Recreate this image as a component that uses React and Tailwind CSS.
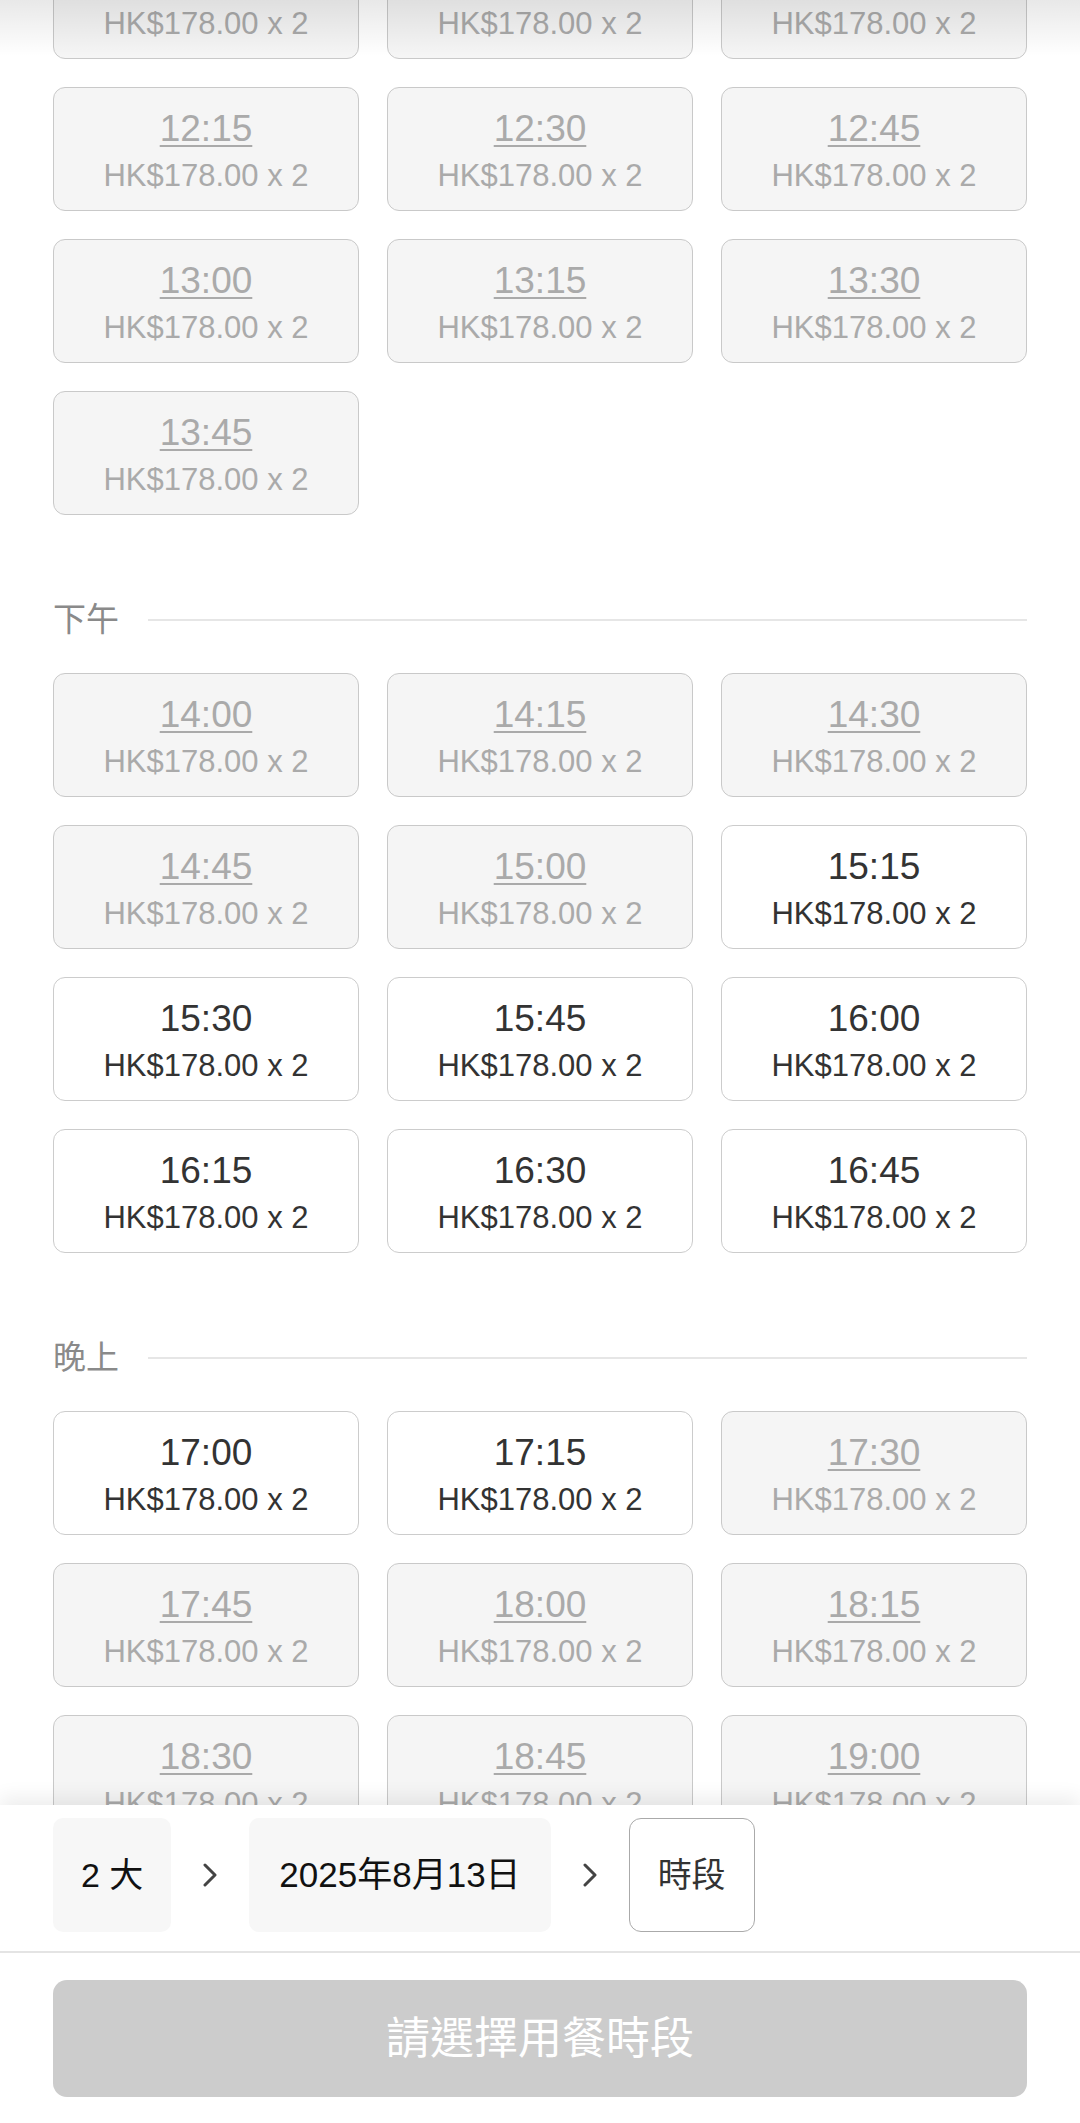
import { ChevronRight } from 'lucide-react';

const PRICE = 'HK$178.00 x 2';

const sections = [
  {
    label: null,
    slots: [
      { t: '11:30', ok: false },
      { t: '11:45', ok: false },
      { t: '12:00', ok: false },
      { t: '12:15', ok: false },
      { t: '12:30', ok: false },
      { t: '12:45', ok: false },
      { t: '13:00', ok: false },
      { t: '13:15', ok: false },
      { t: '13:30', ok: false },
      { t: '13:45', ok: false },
    ],
  },
  {
    label: '下午',
    slots: [
      { t: '14:00', ok: false },
      { t: '14:15', ok: false },
      { t: '14:30', ok: false },
      { t: '14:45', ok: false },
      { t: '15:00', ok: false },
      { t: '15:15', ok: true },
      { t: '15:30', ok: true },
      { t: '15:45', ok: true },
      { t: '16:00', ok: true },
      { t: '16:15', ok: true },
      { t: '16:30', ok: true },
      { t: '16:45', ok: true },
    ],
  },
  {
    label: '晚上',
    slots: [
      { t: '17:00', ok: true },
      { t: '17:15', ok: true },
      { t: '17:30', ok: false },
      { t: '17:45', ok: false },
      { t: '18:00', ok: false },
      { t: '18:15', ok: false },
      { t: '18:30', ok: false },
      { t: '18:45', ok: false },
      { t: '19:00', ok: false },
    ],
  },
];

function Slot({ t, ok }) {
  return (
    <button
      disabled={!ok}
      className={`flex h-[124px] flex-col items-center rounded-[12px] border pt-[19px] ${
        ok ? 'border-[#cccccc] bg-white text-[#333333]' : 'border-[#c9c9c9] bg-[#f5f5f5] text-[#aaaaaa]'
      }`}
    >
      <span
        className={`text-[37px] leading-[44px] ${ok ? '' : 'underline decoration-2 underline-offset-4'}`}
      >
        {t}
      </span>
      <span className="mt-[7px] text-[31px] leading-[36px]">{PRICE}</span>
    </button>
  );
}

function SectionHeader({ label }) {
  return (
    <div className="mt-[85px] flex h-[40px] items-center">
      <span className="text-[33px] leading-[40px] text-[#8a8a8a]">{label}</span>
      <div className="ml-[29px] h-[2px] flex-1 bg-[#e6e6e6]" />
    </div>
  );
}

function Chevron() {
  return (
    <svg width="14" height="24" viewBox="0 0 14 24" className="shrink-0">
      <polyline points="2,2 12,12 2,22" fill="none" stroke="#444" strokeWidth="3" strokeLinecap="round" strokeLinejoin="round" />
    </svg>
  );
}

export default function App() {
  return (
    <div
      className="relative flex h-[2123px] flex-col overflow-hidden bg-white"
      style={{ fontFamily: '"Liberation Sans", Arial, "Noto Sans CJK TC", sans-serif' }}
    >
      <div className="min-h-0 flex-1 overflow-hidden px-[53px]">
        {/* scrolled list, first row half out of view */}
        <div className="mt-[-65px]">
          {sections.map((s, i) => (
            <div key={i}>
              {s.label && <SectionHeader label={s.label} />}
              <div className={`grid grid-cols-3 gap-[28px] ${s.label ? 'mt-[33px]' : ''}`}>
                {s.slots.map((slot) => (
                  <Slot key={slot.t} {...slot} />
                ))}
              </div>
            </div>
          ))}
        </div>
      </div>

      <div className="pointer-events-none absolute inset-x-0 top-0 h-[56px] bg-linear-to-b from-black/[0.09] to-transparent" />

      <div className="relative z-10 shrink-0 bg-white shadow-[0_-8px_18px_rgba(0,0,0,0.07)]">
        <div className="flex items-center gap-[32px] px-[53px] pt-[13px] pb-[19px]">
          <div className="flex h-[114px] items-center rounded-[10px] bg-[#f7f7f7] px-[28px] text-[34px] text-[#111]">
            2 大
          </div>
          <Chevron />
          <div className="flex h-[114px] items-center rounded-[10px] bg-[#f7f7f7] px-[30px] text-[35px] text-[#111]">
            2025年8月13日
          </div>
          <Chevron />
          <div className="flex h-[114px] items-center rounded-[12px] border-[1.5px] border-[#aaaaaa] bg-white px-[28px] text-[34px] text-[#333]">
            時段
          </div>
        </div>
        <div className="h-[2px] bg-[#e4e4e4]" />
        <div className="px-[53px] pt-[27px] pb-[26px]">
          <button
            disabled
            className="flex h-[117px] w-full items-center justify-center rounded-[14px] bg-[#cccccc] text-[44px] text-white"
          >
            請選擇用餐時段
          </button>
        </div>
      </div>
    </div>
  );
}
